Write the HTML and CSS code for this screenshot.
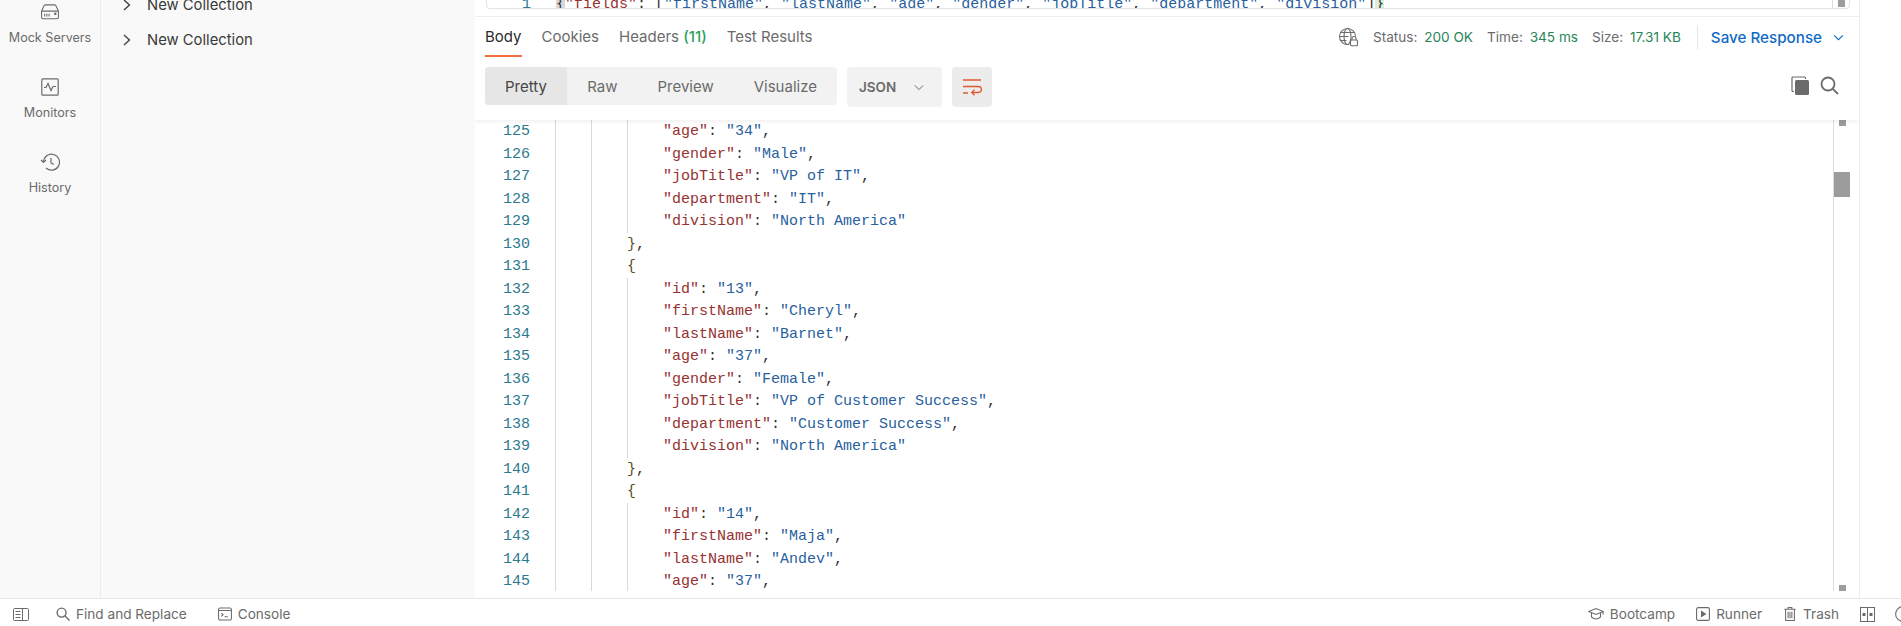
FILE: index.html
```html
<!DOCTYPE html>
<html lang="en">
<head>
<meta charset="utf-8">
<title>Postman response</title>
<link rel="stylesheet" href="styles.css">
</head>
<body>
<div class="workspace">
  <nav class="sidebar">
    <a class="side-item">
      <svg class="side-icon" viewBox="0 0 22 18" fill="none" stroke="#6b6b6b" stroke-width="1.2"><path d="M1.5 8 4 2.5Q4.5 1 6 1h10q1.5 0 2 1.5L20.500 8v7q0 1.500-1.500 1.500H3Q1.500 16.500 1.500 15z"/><path d="M1.500 8h19M5 11v3M7.500 11v3M10 11v3"/><circle cx="17" cy="11" r=".8" fill="#6b6b6b"/></svg>
      <span>Mock Servers</span>
    </a>
    <a class="side-item">
      <svg class="side-icon" viewBox="0 0 18 18" fill="none" stroke="#6b6b6b" stroke-width="1.200"><rect x=".8" y=".8" width="16.400" height="16.400" rx="1"/><path d="M3 9.500h2l2-4 3 7 2-4h3"/></svg>
      <span>Monitors</span>
    </a>
    <a class="side-item">
      <svg class="side-icon" viewBox="0 0 20 18" fill="none" stroke="#6b6b6b" stroke-width="1.200"><path d="M3.500 9a8 8 0 1 1 2.500 6"/><path d="M1 7l2.500 2.500L6 7"/><path d="M11 5v5l3 1.500"/></svg>
      <span>History</span>
    </a>
  </nav>
  <aside class="collections">
    <div class="coll-row coll-cut">
      <svg class="chev" viewBox="0 0 8 12" fill="none" stroke="#3a3a3a" stroke-width="1.300"><path d="M1 1l5.500 5L1 11"/></svg>
      <span>New Collection</span>
    </div>
    <div class="coll-row">
      <svg class="chev" viewBox="0 0 8 12" fill="none" stroke="#3a3a3a" stroke-width="1.300"><path d="M1 1l5.500 5L1 11"/></svg>
      <span>New Collection</span>
    </div>
  </aside>
  <main class="main">
    <div class="request">
      <div class="req-scroll">
        <div class="row">
          <span class="num">1</span>
          <span class="code"><b class="hl-a">{</b><b class="k">"fields"</b>: [<b class="s">"firstName"</b>, <b class="s">"lastName"</b>, <b class="s">"age"</b>, <b class="s">"gender"</b>, <b class="s">"jobTitle"</b>, <b class="s">"department"</b>, <b class="s">"division"</b>]<b class="hl-b">}</b></span>
        </div>
      </div>
      <div class="req-bar"><i class="req-thumb"></i></div>
    </div>
    <section class="response">
      <div class="tabs-row">
        <div class="tabs">
          <span class="tab active">Body</span>
          <span class="tab">Cookies</span>
          <span class="tab">Headers <em>(11)</em></span>
          <span class="tab">Test Results</span>
        </div>
        <div class="meta">
          <svg class="globe" viewBox="0 0 20 20" fill="none" stroke="#6b6b6b" stroke-width="1.100"><path d="M9.500 17.500a8 8 0 1 1 8-8"/><path d="M1.500 9.500h9M2.500 5.500h14M2.500 13.500h6"/><ellipse cx="9.500" cy="9.500" rx="3.500" ry="8"/><rect x="12.500" y="13" width="7" height="5.800" rx="1"/><path d="M14 13v-1.500a2 2 0 0 1 4 0V13"/></svg>
          <span class="stat">Status: <em>200 OK</em></span>
          <span class="stat">Time: <em>345 ms</em></span>
          <span class="stat stat-last">Size: <em>17.31 KB</em></span>
          <span class="sep"></span>
          <span class="save">Save Response</span>
          <svg class="save-chev" viewBox="0 0 12 8" fill="none" stroke="#0f6bc4" stroke-width="1.300"><path d="M1 1.500l5 5 5-5"/></svg>
        </div>
      </div>
      <div class="toolbar">
        <div class="seg">
          <span class="seg-item on">Pretty</span>
          <span class="seg-item">Raw</span>
          <span class="seg-item">Preview</span>
          <span class="seg-item">Visualize</span>
        </div>
        <div class="format">
          <span>JSON</span>
          <svg class="fmt-chev" viewBox="0 0 12 8" fill="none" stroke="#6b6b6b" stroke-width="1.200"><path d="M1 1.500l5 5 5-5"/></svg>
        </div>
        <div class="wrap-btn">
          <svg class="wrap-icon" viewBox="0 0 20 18" fill="none" stroke="#e0592a" stroke-width="1.300"><path d="M1 2h18M1 8.500h15.500a3 3 0 0 1 0 6H10M1 15h5"/><path d="M12.500 11.800 9.700 14.500l2.800 2.700"/></svg>
        </div>
        <div class="tools">
          <svg class="copy" viewBox="0 0 18 19"><path d="M3 15.500H2a1 1 0 0 1-1-1V2a1 1 0 0 1 1-1h11.500a1 1 0 0 1 1 1v1" fill="none" stroke="#6b6b6b" stroke-width="1.200"/><rect x="4" y="4" width="14" height="15" rx="1.500" fill="#6b6b6b"/></svg>
          <svg class="find" viewBox="0 0 19 19" fill="none" stroke="#6b6b6b" stroke-width="1.800"><circle cx="8" cy="8" r="6.500"/><path d="M12.800 12.800 18 18"/></svg>
        </div>
      </div>
      <div class="editor">
        <div class="lines">
          <div class="row"><span class="num">125</span><i class="g"></i><i class="g"></i><i class="g"></i><span class="code"><b class="k">"age"</b>: <b class="s">"34"</b>,</span></div>
          <div class="row"><span class="num">126</span><i class="g"></i><i class="g"></i><i class="g"></i><span class="code"><b class="k">"gender"</b>: <b class="s">"Male"</b>,</span></div>
          <div class="row"><span class="num">127</span><i class="g"></i><i class="g"></i><i class="g"></i><span class="code"><b class="k">"jobTitle"</b>: <b class="s">"VP of IT"</b>,</span></div>
          <div class="row"><span class="num">128</span><i class="g"></i><i class="g"></i><i class="g"></i><span class="code"><b class="k">"department"</b>: <b class="s">"IT"</b>,</span></div>
          <div class="row"><span class="num">129</span><i class="g"></i><i class="g"></i><i class="g"></i><span class="code"><b class="k">"division"</b>: <b class="s">"North America"</b></span></div>
          <div class="row"><span class="num">130</span><i class="g"></i><i class="g"></i><span class="code"><b class="hl-c">}</b>,</span></div>
          <div class="row"><span class="num">131</span><i class="g"></i><i class="g"></i><span class="code"><b class="hl-c">{</b></span></div>
          <div class="row"><span class="num">132</span><i class="g"></i><i class="g"></i><i class="g"></i><span class="code"><b class="k">"id"</b>: <b class="s">"13"</b>,</span></div>
          <div class="row"><span class="num">133</span><i class="g"></i><i class="g"></i><i class="g"></i><span class="code"><b class="k">"firstName"</b>: <b class="s">"Cheryl"</b>,</span></div>
          <div class="row"><span class="num">134</span><i class="g"></i><i class="g"></i><i class="g"></i><span class="code"><b class="k">"lastName"</b>: <b class="s">"Barnet"</b>,</span></div>
          <div class="row"><span class="num">135</span><i class="g"></i><i class="g"></i><i class="g"></i><span class="code"><b class="k">"age"</b>: <b class="s">"37"</b>,</span></div>
          <div class="row"><span class="num">136</span><i class="g"></i><i class="g"></i><i class="g"></i><span class="code"><b class="k">"gender"</b>: <b class="s">"Female"</b>,</span></div>
          <div class="row"><span class="num">137</span><i class="g"></i><i class="g"></i><i class="g"></i><span class="code"><b class="k">"jobTitle"</b>: <b class="s">"VP of Customer Success"</b>,</span></div>
          <div class="row"><span class="num">138</span><i class="g"></i><i class="g"></i><i class="g"></i><span class="code"><b class="k">"department"</b>: <b class="s">"Customer Success"</b>,</span></div>
          <div class="row"><span class="num">139</span><i class="g"></i><i class="g"></i><i class="g"></i><span class="code"><b class="k">"division"</b>: <b class="s">"North America"</b></span></div>
          <div class="row"><span class="num">140</span><i class="g"></i><i class="g"></i><span class="code"><b class="hl-c">}</b>,</span></div>
          <div class="row"><span class="num">141</span><i class="g"></i><i class="g"></i><span class="code"><b class="hl-c">{</b></span></div>
          <div class="row"><span class="num">142</span><i class="g"></i><i class="g"></i><i class="g"></i><span class="code"><b class="k">"id"</b>: <b class="s">"14"</b>,</span></div>
          <div class="row"><span class="num">143</span><i class="g"></i><i class="g"></i><i class="g"></i><span class="code"><b class="k">"firstName"</b>: <b class="s">"Maja"</b>,</span></div>
          <div class="row"><span class="num">144</span><i class="g"></i><i class="g"></i><i class="g"></i><span class="code"><b class="k">"lastName"</b>: <b class="s">"Andev"</b>,</span></div>
          <div class="row"><span class="num">145</span><i class="g"></i><i class="g"></i><i class="g"></i><span class="code"><b class="k">"age"</b>: <b class="s">"37"</b>,</span></div>
        </div>
        <div class="scrollbar">
          <i class="arrow"></i>
          <i class="thumb"></i>
          <i class="arrow"></i>
        </div>
      </div>
    </section>
  </main>
  <div class="strip"></div>
</div>
<footer class="status">
  <div class="status-left">
    <svg class="st-pane" viewBox="0 0 16 13" fill="none" stroke="#6b6b6b" stroke-width="1"><rect x=".5" y=".5" width="15" height="12" rx="1"/><path d="M9.500 .5v12M2.500 3.500h5M2.500 6.500h5M2.500 9.500h5"/></svg>
    <span class="st-item st-find"><svg class="st-icon" viewBox="0 0 15 15" fill="none" stroke="#6b6b6b" stroke-width="1.500"><circle cx="6" cy="6" r="4.800"/><path d="M9.500 9.500 14.500 14.500"/></svg>Find and Replace</span>
    <span class="st-item"><svg class="st-icon" viewBox="0 0 15 14" fill="none" stroke="#6b6b6b" stroke-width="1.100"><rect x=".6" y=".6" width="13.800" height="12.800" rx="1.500"/><path d="M.6 3.200h13.800M3.500 6l2 1.800-2 1.800M7 10h3.500"/></svg>Console</span>
  </div>
  <div class="status-right">
    <span class="st-item"><svg class="st-icon wide" viewBox="0 0 16 13" fill="none" stroke="#6b6b6b" stroke-width="1.100"><path d="M.8 4 8 1l7.200 3L8 7z"/><path d="M3.500 5.500v4Q8 13.500 12.500 9.500v-4M15 4v3"/></svg>Bootcamp</span>
    <span class="st-item"><svg class="st-icon" viewBox="0 0 14 14" fill="none" stroke="#6b6b6b" stroke-width="1.100"><rect x=".6" y=".6" width="12.800" height="12.800" rx="1.500"/><path d="M5.500 4.500 9.500 7l-4 2.500z" fill="#6b6b6b"/></svg>Runner</span>
    <span class="st-item"><svg class="st-icon" viewBox="0 0 13 15" fill="none" stroke="#6b6b6b" stroke-width="1.100"><path d="M.5 2.500h12M4.500 2.500V.6h4v1.900M1.800 2.500v11.900h9.400V2.500M4.500 5v7M6.500 5v7M8.500 5v7"/></svg>Trash</span>
    <svg class="st-two" viewBox="0 0 15 15" fill="none" stroke="#6b6b6b" stroke-width="1"><rect x=".5" y=".5" width="14" height="14"/><path d="M7.500 .5v14"/><rect x="3" y="6.500" width="2" height="2" fill="#6b6b6b"/><rect x="10" y="6.500" width="2" height="2" fill="#6b6b6b"/></svg>
    <svg class="st-help" viewBox="0 0 16 16" fill="none" stroke="#6b6b6b" stroke-width="1.100"><circle cx="8" cy="8" r="7.400"/></svg>
  </div>
</footer>
</body>
</html>
```

FILE: styles.css
```css
* { box-sizing: border-box; }
html, body { margin: 0; height: 100%; }
body {
  width: 1901px;
  height: 626px;
  overflow: hidden;
  display: flex;
  flex-direction: column;
  background: #fff;
  font-family: Inter, "Noto Sans", sans-serif;
  color: #6b6b6b;
}
.workspace { height: 598px; display: flex; overflow: hidden; }

.sidebar {
  width: 101px;
  flex: none;
  background: #f9f9f9;
  border-right: 1px solid #ededed;
  display: flex;
  flex-direction: column;
  align-items: center;
  padding-top: 4px;
}
.side-item {
  height: 75px;
  display: flex;
  flex-direction: column;
  align-items: center;
  font-size: 12.600px;
  line-height: 16px;
}
.side-icon { width: 20px; height: 16px; margin-bottom: 10px; }
.side-item + .side-item .side-icon { height: 18px; margin-top: -1px; margin-bottom: 9px; }

.collections {
  width: 374px;
  flex: none;
  background: #f9f9f9;
  font-size: 14.800px;
  color: #3a3a3a;
}
.coll-row { height: 35px; display: flex; align-items: center; padding-left: 22px; }
.coll-cut { margin-top: -13px; }
.chev { width: 8px; height: 12px; margin-right: 16px; }

.main {
  width: 1384px;
  flex: none;
  display: flex;
  flex-direction: column;
  overflow: hidden;
}
.request {
  height: 9px;
  margin: 0 9px 0 11px;
  border: 1px solid #e4e4e4;
  border-top: 0;
  border-radius: 0 0 4px 4px;
  overflow: hidden;
  display: flex;
  flex: none;
}
.req-scroll { flex: 1; margin-top: -7px; }
.req-bar { width: 17px; flex: none; border-left: 1px solid #dcdcdc; display: flex; justify-content: center; }
.req-thumb { width: 7px; height: 7px; background: #9c9c9c; }

.response { flex: 1; margin-top: 7px; border-top: 1px solid #ededed; display: flex; flex-direction: column; min-height: 0; }

.tabs-row { height: 40px; flex: none; display: flex; justify-content: space-between; padding-left: 10px; }
.tabs { display: flex; gap: 20px; font-size: 15px; }
.tab { height: 40px; padding-top: 11px; line-height: 18px; border-bottom: 2px solid transparent; }
.tab.active { color: #2b2b2b; border-bottom-color: #f0703e; }
.tab em { font-style: normal; color: #2f9e5f; font-weight: 500; }

.meta { display: flex; align-items: center; font-size: 13.600px; height: 36px; margin-top: 2px; }
.globe { width: 20px; height: 20px; margin-right: 15px; }
.stat { margin-right: 14px; }
.stat-last { margin-right: 16px; }
.stat em { font-style: normal; color: #26865a; margin-left: 3px; }
.sep { width: 1px; height: 25px; background: #e6e6e6; margin-right: 13px; }
.save { font-size: 15.200px; font-weight: 500; color: #0f6bc4; }
.save-chev { width: 11px; height: 7px; margin-left: 11px; margin-right: 15px; }

.toolbar { height: 63px; flex: none; display: flex; padding: 10px 0 0 10px; box-shadow: 0 2px 4px rgba(0,0,0,.06); position: relative; z-index: 1; background: #fff; align-items: flex-start; }
.seg { display: flex; height: 38px; width: 352px; background: #f2f2f2; border-radius: 4px; font-size: 15px; overflow: hidden; }
.seg-item { display: flex; align-items: center; padding: 0 20px; }
.seg-item.on { background: #e6e6e6; width: 83px; color: #444; }
.format { margin-left: 10px; width: 95px; height: 40px; background: #f2f2f2; border-radius: 4px; display: flex; align-items: center; padding-left: 12px; font-size: 13.500px; font-weight: 600; }
.fmt-chev { width: 10px; height: 7px; margin-left: 18px; }
.wrap-btn { margin-left: 10px; width: 40px; height: 40px; background: #ececec; border-radius: 4px; display: flex; align-items: center; justify-content: center; }
.wrap-icon { width: 20px; height: 18px; }
.tools { margin-left: auto; display: flex; gap: 11px; padding-top: 9px; padding-right: 20px; }
.copy { width: 18px; height: 19px; }
.find { width: 19px; height: 19px; }

.editor { height: 471px; flex: none; margin: 0 9px 0 11px; display: flex; overflow: hidden; }
.lines { flex: 1; }
.row {
  display: flex;
  height: 22.5px;
  font-family: "Liberation Mono", "DejaVu Sans Mono", monospace;
  font-size: 15px;
  line-height: 24.5px;
  color: #333;
}
.num { width: 44px; margin-right: 25px; text-align: right; color: #2c7a8e; flex: none; }
.g { width: 36px; flex: none; border-left: 1px solid #d9d9d9; }
.code { white-space: pre; }
.code b { font-weight: 400; }
.k { color: #963232; }
.s { color: #2a5f9e; }
.hl-a { background: #d8d8d8; }
.hl-b { background: #dcefdc; }
.hl-c { color: #5a5020; }

.scrollbar { width: 17px; flex: none; border-left: 1px solid #dcdcdc; display: flex; flex-direction: column; align-items: center; }
.arrow { width: 7px; height: 6px; background: #9c9c9c; flex: none; }
.thumb { width: 17px; height: 25px; background: #9c9c9c; margin-top: 46px; margin-bottom: auto; flex: none; }

.strip { flex: 1; border-left: 1px solid #ededed; }

.status {
  height: 28px;
  flex: none;
  border-top: 1px solid #e6e6e6;
  display: flex;
  justify-content: space-between;
  align-items: center;
  font-size: 13.600px;
  padding: 3px 0 0 13px;
  white-space: nowrap;
}
.status-left, .status-right { display: flex; align-items: center; }
.st-pane { width: 16px; height: 13px; margin-right: 27px; }
.st-item { display: flex; align-items: center; }
.st-find { margin-right: 31px; }
.st-icon { width: 14px; height: 14px; margin-right: 6px; }
.st-icon.wide { width: 16px; }
.status-right .st-item { margin-right: 21px; }
.st-two { width: 15px; height: 15px; margin-right: 20px; }
.st-help { width: 16px; height: 16px; margin-right: -10px; }
```
